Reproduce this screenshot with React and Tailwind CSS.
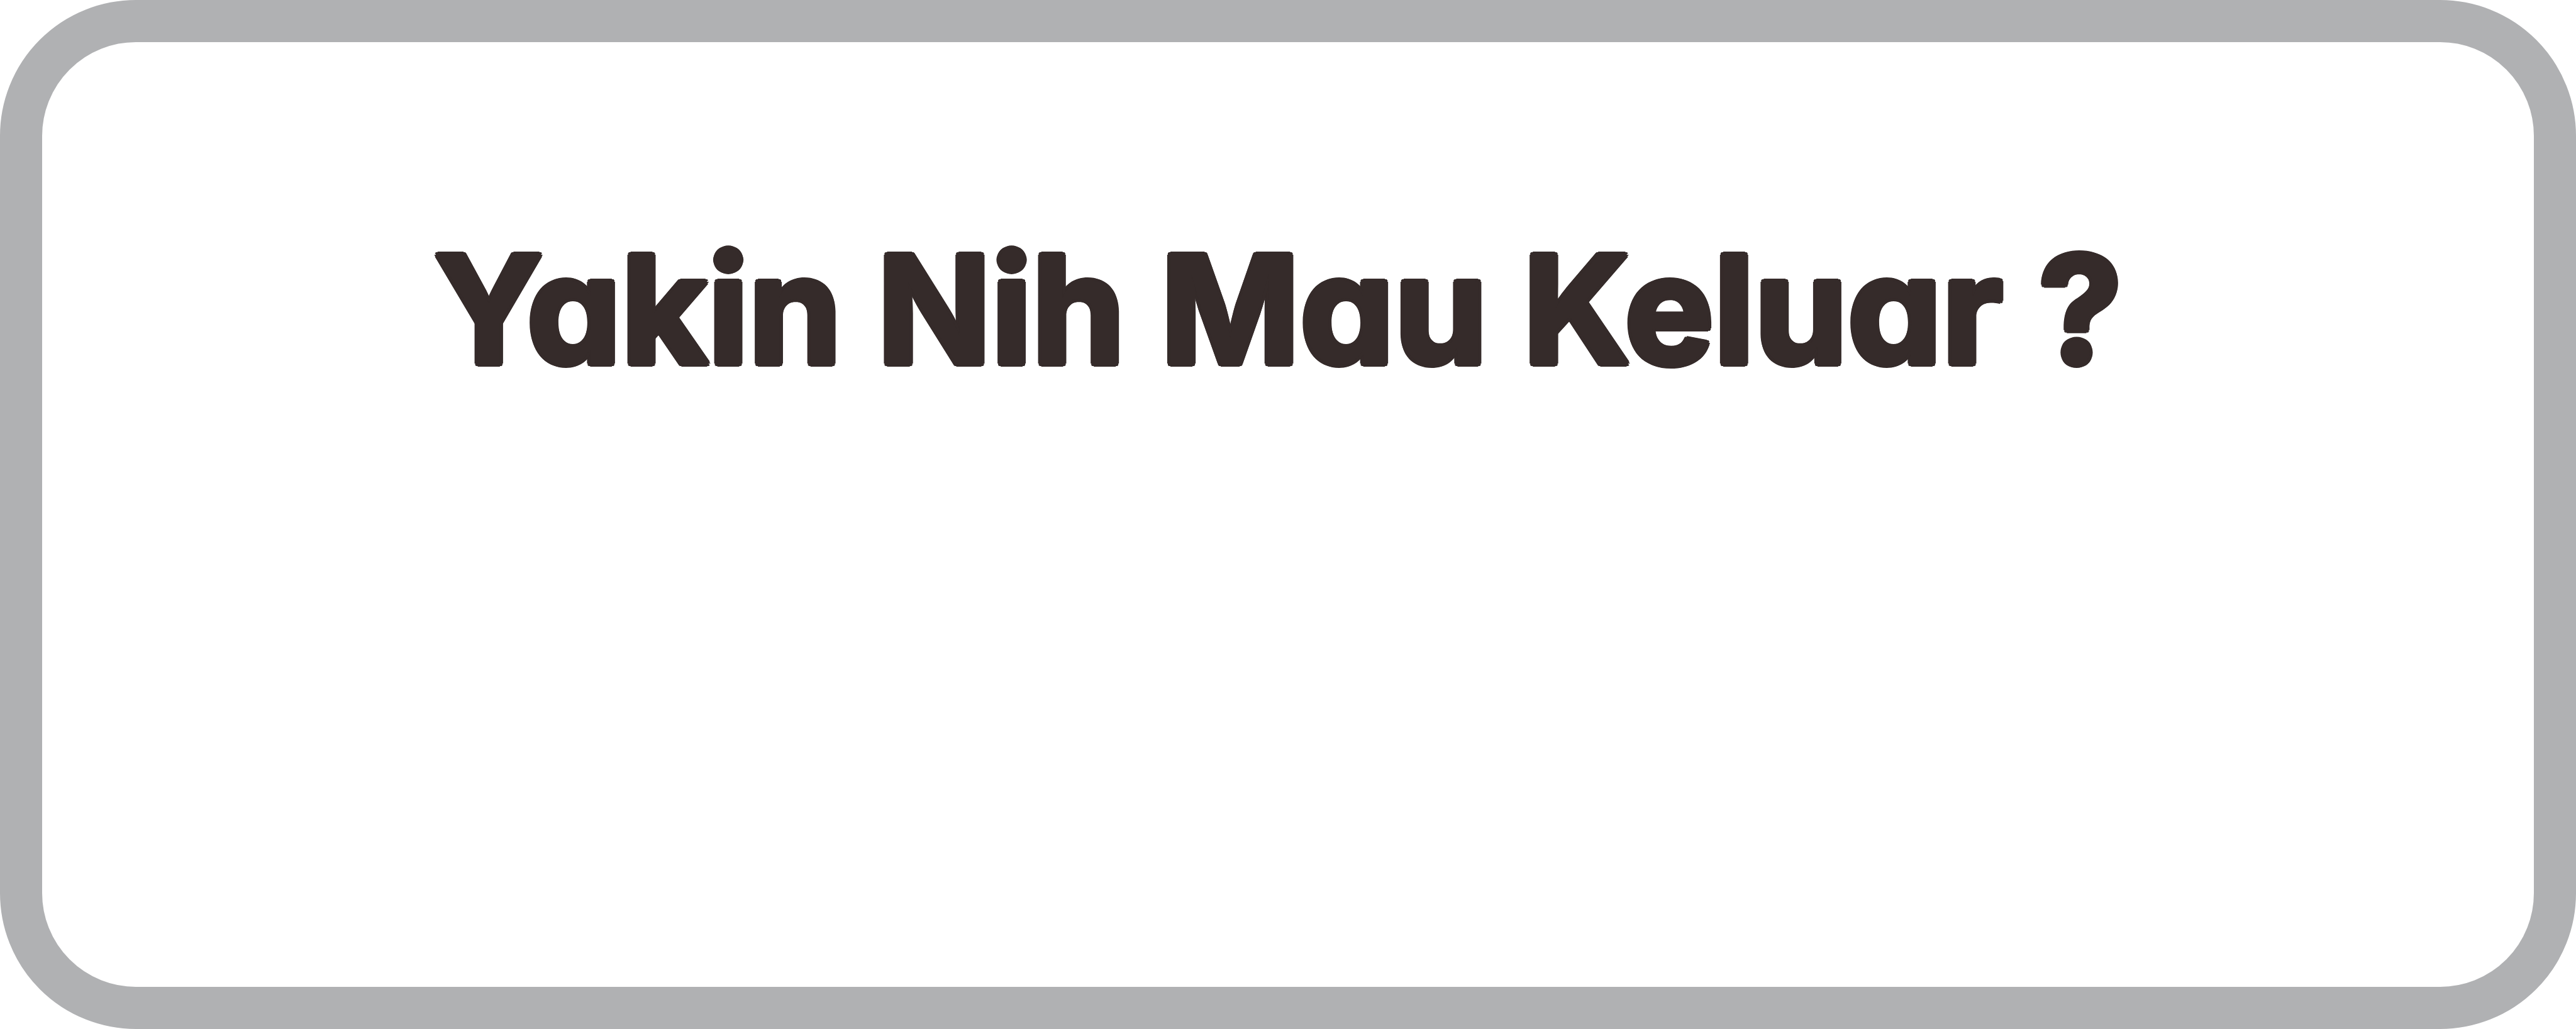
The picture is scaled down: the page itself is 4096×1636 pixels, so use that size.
export default function App() {
  return (
    <main className="flex min-h-screen w-full flex-col items-center rounded-[216px] border-[67px] border-[#b0b1b3] bg-white px-8 pt-[264px]">
      {/* The ring of hard shadows thickens the letters and rounds their corners. */}
      <h1 className="pr-8 text-center font-[Inter,sans-serif] text-[238px] leading-[320px] font-bold text-[#352b2a] [font-feature-settings:'cv11'] [text-shadow:5px_0_#352b2a,4px_3px_#352b2a,3px_4px_#352b2a,0_5px_#352b2a,-3px_4px_#352b2a,-4px_3px_#352b2a,-5px_0_#352b2a,-4px_-3px_#352b2a,-3px_-4px_#352b2a,0_-5px_#352b2a,3px_-4px_#352b2a,4px_-3px_#352b2a]">
        Yakin Nih Mau Keluar ?
      </h1>
    </main>
  );
}
